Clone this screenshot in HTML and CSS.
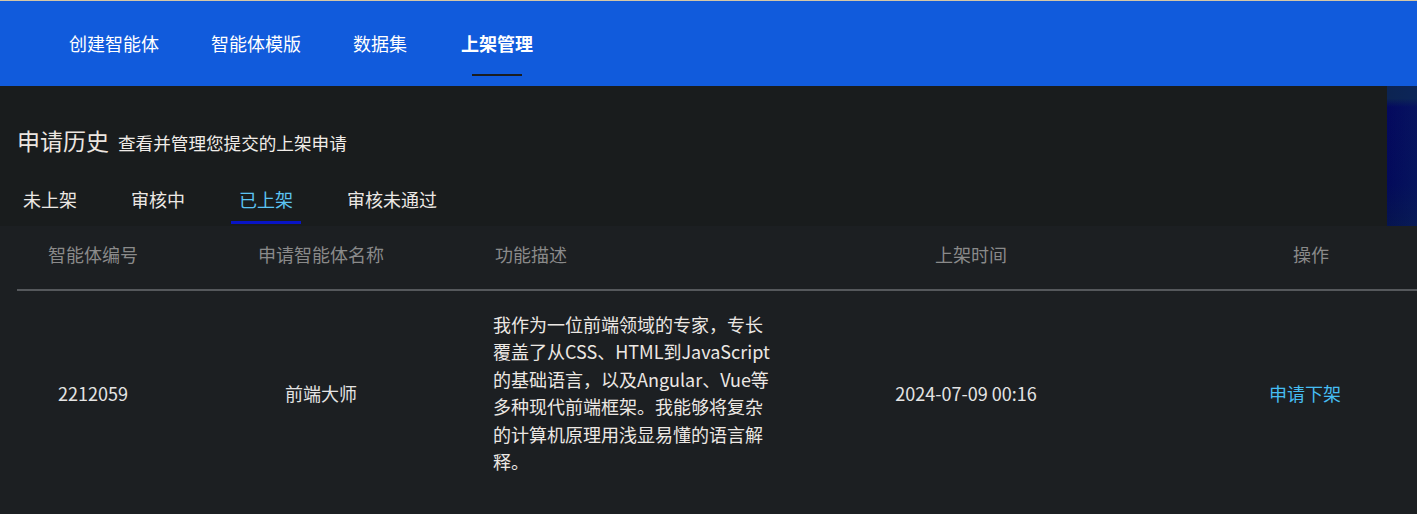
FILE: index.html
```html
<!DOCTYPE html>
<html lang="zh-CN">
<head>
<meta charset="utf-8">
<title>上架管理</title>
<link rel="stylesheet" href="styles.css">
</head>
<body>
<div class="topline"></div>
<header class="nav">
  <a class="nav-item">创建智能体</a>
  <a class="nav-item">智能体模版</a>
  <a class="nav-item">数据集</a>
  <a class="nav-item active">上架管理</a>
</header>
<section class="panel">
  <div class="panel-main">
    <div class="title-row">
      <h1 class="title">申请历史</h1>
      <span class="subtitle">查看并管理您提交的上架申请</span>
    </div>
    <div class="tabs">
      <div class="tab">未上架</div>
      <div class="tab">审核中</div>
      <div class="tab active">已上架</div>
      <div class="tab">审核未通过</div>
    </div>
  </div>
  <div class="panel-decor"></div>
</section>
<main class="table-wrap">
  <div class="table">
    <div class="row head">
      <div class="cell c1">智能体编号</div>
      <div class="cell c2">申请智能体名称</div>
      <div class="cell c3">功能描述</div>
      <div class="cell c4">上架时间</div>
      <div class="cell c5">操作</div>
    </div>
    <div class="row body">
      <div class="cell c1">2212059</div>
      <div class="cell c2">前端大师</div>
      <div class="cell c3"><p class="desc">我作为一位前端领域的专家，专长覆盖了从CSS、HTML到JavaScript的基础语言，以及Angular、Vue等多种现代前端框架。我能够将复杂的计算机原理用浅显易懂的语言解释。</p></div>
      <div class="cell c4">2024-07-09 00:16</div>
      <div class="cell c5"><a class="link">申请下架</a></div>
    </div>
  </div>
</main>
</body>
</html>
```
FILE: styles.css
```css
* { box-sizing: border-box; }
html, body { margin: 0; padding: 0; }
body {
  background: #1c1f22;
  font-family: "Noto Sans CJK SC", sans-serif;
  color: #e4e4e4;
  overflow-x: hidden;
  width: 1417px;
}
.topline { height: 1px; background: #d6c7a6; }

.nav {
  height: 85px;
  background: #115bdc;
  display: flex;
  align-items: center;
  gap: 52px;
  padding-left: 69px;
  padding-bottom: 2px;
}
.nav-item {
  position: relative;
  color: #ffffff;
  font-size: 18px;
  line-height: 24px;
  cursor: pointer;
}
.nav-item.active { font-weight: 700; margin-left: 2px; }
.nav-item.active::after {
  content: "";
  position: absolute;
  left: 11px;
  right: 11px;
  top: 43px;
  height: 2px;
  background: #1b1d20;
}

.panel {
  display: flex;
  background: #191c1d;
  height: 140px;
}
.panel-main { flex: 1; }
.panel-decor {
  width: 30px;
  background:
    linear-gradient(to right, rgba(10,30,90,0.0), rgba(12,40,100,0.35)),
    linear-gradient(to bottom, #0c2452 0, #0c2452 9%, #04095e 15%, #030a5a 70%, #06144f 100%);
}
.title-row {
  display: flex;
  align-items: baseline;
  gap: 9px;
  padding: 37px 0 0 17px;
}
.title {
  margin: 0;
  font-size: 23px;
  font-weight: 400;
  line-height: 34px;
  color: #ece6e0;
}
.subtitle {
  font-size: 17.6px;
  color: #f0ece8;
}
.tabs {
  display: flex;
  gap: 38px;
  padding-left: 15px;
  margin-top: 30px;
}
.tab {
  padding: 0 8px 10px;
  font-size: 18px;
  line-height: 24px;
  color: #ece8e4;
  border-bottom: 3px solid transparent;
}
.tab.active {
  color: #5cc3f3;
  border-bottom-color: #0814c6;
}

.table-wrap {
  background: #1c1f22;
  padding-left: 17px;
  overflow: hidden;
}
.table { width: 1445px; }
.row { display: flex; align-items: center; }
.row.head {
  height: 65px;
  border-bottom: 2px solid #55585c;
  color: #8a8a8a;
  padding-bottom: 8px;
}
.row.body { padding: 20px 0 21px; }
.cell {
  font-size: 18px;
  line-height: 24px;
  text-align: center;
}
.c1 { width: 152px; }
.c2 { width: 304px; }
.c3 { width: 317px; text-align: left; padding-left: 22px; }
.row.body .c3 { padding-left: 20px; }
.c4 { width: 358px; }
.row.head .c4 { padding-left: 4px; }
.row.body .c4 { padding-right: 6px; }
.c5 { width: 314px; }
.row.head .c5 { padding-left: 12px; }
.desc {
  margin: 0;
  width: 286px;
  line-height: 27.4px;
  color: #ece8e4;
}
.link { color: #46bdf2; cursor: pointer; }
```
